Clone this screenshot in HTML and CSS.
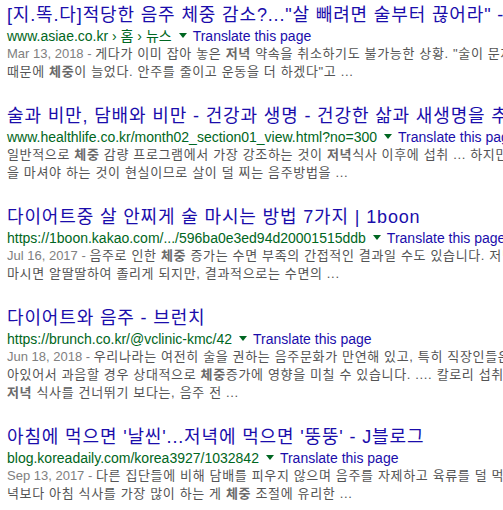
FILE: index.html
```html
<!DOCTYPE html>
<html lang="ko">
<head>
    <meta charset="UTF-8">
    <meta name="viewport" content="width=device-width, initial-scale=1.0">
    <title>저녁 음주 체중 - 검색결과</title>
    <link rel="stylesheet" href="styles.css">
</head>
<body>
    <div id="results">
        <div class="g">
            <h3 class="r"><a href="#">[지.똑.다]적당한 음주 체중 감소?..."살 빼려면 술부터 끊어라" - 아시아경제</a></h3>
            <div class="url">
                <cite>www.asiae.co.kr › 홈 › 뉴스</cite><span class="arrow"></span><a class="fl" href="#">Translate this page</a>
            </div>
            <div class="st">
                <span class="f">Mar 13, 2018 - </span>게다가 이미 잡아 놓은 <b>저녁</b> 약속을 취소하기도 불가능한 상황. "술이 문제야"<br>
                때문에 <b>체중</b>이 늘었다. 안주를 줄이고 운동을 더 하겠다"고 ...
            </div>
        </div>

        <div class="g">
            <h3 class="r"><a href="#">술과 비만, 담배와 비만 - 건강과 생명 - 건강한 삶과 새생명을 추구합니다</a></h3>
            <div class="url">
                <cite>www.healthlife.co.kr/month02_section01_view.html?no=300</cite><span class="arrow"></span><a class="fl" href="#">Translate this page</a>
            </div>
            <div class="st">
                일반적으로 <b>체중</b> 감량 프로그램에서 가장 강조하는 것이 <b>저녁</b>식사 이후에 섭취 ... 하지만 술<br>
                을 마셔야 하는 것이 현실이므로 살이 덜 찌는 음주방법을 ...
            </div>
        </div>

        <div class="g">
            <h3 class="r"><a href="#">다이어트중 살 안찌게 술 마시는 방법 7가지 | 1boon</a></h3>
            <div class="url">
                <cite>https://1boon.kakao.com/.../596ba0e3ed94d20001515ddb</cite><span class="arrow"></span><a class="fl" href="#">Translate this page</a>
            </div>
            <div class="st">
                <span class="f">Jul 16, 2017 - </span>음주로 인한 <b>체중</b> 증가는 수면 부족의 간접적인 결과일 수도 있습니다. 저녁에 술을<br>
                마시면 알딸딸하여 졸리게 되지만, 결과적으로는 수면의 ...
            </div>
        </div>

        <div class="g">
            <h3 class="r"><a href="#">다이어트와 음주 - 브런치</a></h3>
            <div class="url">
                <cite>https://brunch.co.kr/@vclinic-kmc/42</cite><span class="arrow"></span><a class="fl" href="#">Translate this page</a>
            </div>
            <div class="st">
                <span class="f">Jun 18, 2018 - </span>우리나라는 여전히 술을 권하는 음주문화가 만연해 있고, 특히 직장인들은<br>
                아있어서 과음할 경우 상대적으로 <b>체중</b>증가에 영향을 미칠 수 있습니다. .... 칼로리 섭취<br>
                <b>저녁</b> 식사를 건너뛰기 보다는, 음주 전 ...
            </div>
        </div>

        <div class="g">
            <h3 class="r"><a href="#">아침에 먹으면 '날씬'...저녁에 먹으면 '뚱뚱' - J블로그</a></h3>
            <div class="url">
                <cite>blog.koreadaily.com/korea3927/1032842</cite><span class="arrow"></span><a class="fl" href="#">Translate this page</a>
            </div>
            <div class="st">
                <span class="f">Sep 13, 2017 - </span>다른 집단들에 비해 담배를 피우지 않으며 음주를 자제하고 육류를 덜 먹는<br>
                녁보다 아침 식사를 가장 많이 하는 게 <b>체중</b> 조절에 유리한 ...
            </div>
        </div>
    </div>
</body>
</html>
```

FILE: styles.css
```css
body{
    margin: 0;
    padding: 3px 0 0 7px;
    background-color: white;
    font-family: "Liberation Sans", Arial, "Noto Sans CJK KR", sans-serif;
    overflow: hidden;
}
#results{
    white-space: nowrap;
}
.g{
    margin-bottom: 23px;
}
.r{
    margin: 0;
    font-size: 18px;
    font-weight: normal;
    line-height: 24px;
    letter-spacing: 0.85px;
}
.r a{
    color: #1a0dab;
    text-decoration: none;
}
.url{
    font-size: 14px;
    line-height: 18px;
}
.url cite{
    font-style: normal;
    color: #006621;
}
.arrow{
    display: inline-block;
    vertical-align: middle;
    margin: -3px 6px 0 7px;
    border-style: solid;
    border-width: 5px 4px 0 4px;
    border-color: #006621 transparent transparent transparent;
}
.fl{
    color: #1a0dab;
    text-decoration: none;
}
.st{
    font-size: 13px;
    line-height: 18px;
    color: #545454;
    letter-spacing: 0.65px;
}
.st b{
    color: #6a6a6a;
}
.f{
    color: #808080;
    letter-spacing: 0;
}
```
